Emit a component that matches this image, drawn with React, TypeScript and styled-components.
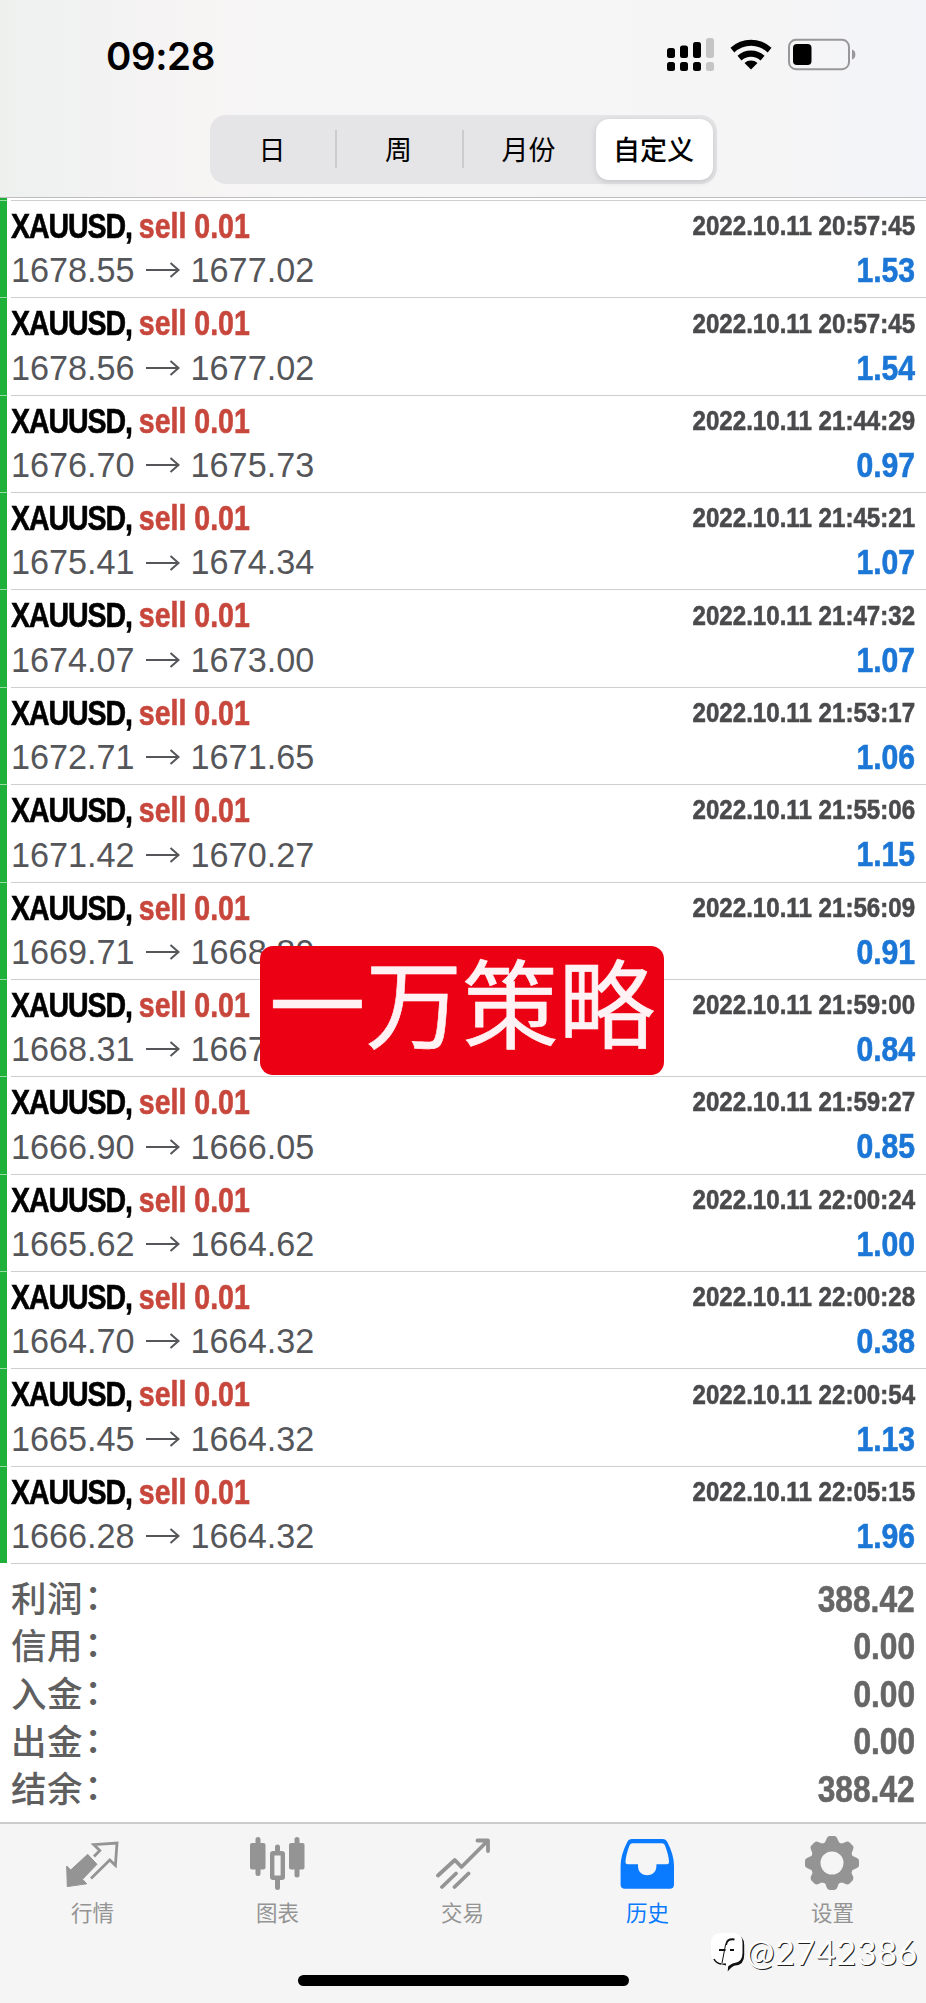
import React from 'react';
import styled, { createGlobalStyle } from 'styled-components';

const Global = createGlobalStyle`
  * { box-sizing: border-box; }
  body { margin: 0; background: #fff; font-family: 'Liberation Sans', 'Noto Sans CJK SC', sans-serif; }
`;

const Screen = styled.div`
  position: relative;
  width: 926px;
  height: 2003px;
  display: flex;
  flex-direction: column;
  background: #fff;
  overflow: hidden;
`;

const Header = styled.header`
  height: 198px;
  flex: none;
  border-bottom: 1px solid #bdbdbf;
  background: linear-gradient(90deg, #edf1ee 0, #f2f2f3 90px, #f7f4f4 200px, #f6f6f6 300px, #f5f5f6 780px, #f3f4f9 926px);
`;

const StatusBar = styled.div`
  height: 115px;
  display: flex;
  justify-content: space-between;
  align-items: flex-start;
  padding: 35px 69px 0 106px;
`;

const Clock = styled.div`
  font: 600 38.5px/42px Inter, sans-serif;
  letter-spacing: -0.4px;
  color: #000;
`;

const Segments = styled.nav`
  width: 507px;
  height: 69px;
  margin-left: 210px;
  padding: 4px 4px 4px 0;
  display: flex;
  border-radius: 16px;
  background: #e5e4e6;
`;

const Segment = styled.button<{ $active?: boolean; $divider?: boolean; $w: number }>`
  position: relative;
  width: ${p => p.$w}px;
  height: 61px;
  padding: 0 2px 1px 0;
  border: 0;
  border-radius: 13px;
  background: ${p => (p.$active ? '#fff' : 'transparent')};
  box-shadow: ${p => (p.$active ? '0 2px 6px rgba(0,0,0,.14)' : 'none')};
  font: ${p => (p.$active ? 500 : 400)} 27px/60px 'Noto Sans CJK SC', sans-serif;
  color: #000;
  white-space: nowrap;
  &::after {
    content: '';
    display: ${p => (p.$divider ? 'block' : 'none')};
    position: absolute;
    right: -1px;
    top: 11px;
    width: 2px;
    height: 38px;
    background: #ccccce;
  }
`;

const Deals = styled.ul`
  margin: 0;
  padding: 2px 0 0;
  list-style: none;
  border-left: 7px solid #1fb03a;
`;

const Deal = styled.li`
  position: relative;
  height: 97.36px;
  margin-left: 4px;
  padding: 5px 11px 0 0;
  border-top: 1px solid #cfcfd1;
  &::before {
    content: '';
    position: absolute;
    left: -11px;
    top: -1px;
    width: 7px;
    height: 1px;
    background: rgba(255, 255, 255, 0.55);
  }
`;

const DealsEnd = styled.div`
  height: 1px;
  margin-left: 11px;
  background: #cfcfd1;
`;

const Line = styled.div<{ $h: number }>`
  display: flex;
  justify-content: space-between;
  align-items: center;
  height: ${p => p.$h}px;
  white-space: pre;
`;

const Condensed = styled.span<{ $size: number; $color: string; $sx: number; $right?: boolean }>`
  display: inline-block;
  font: 700 ${p => p.$size}px/1 'Liberation Sans', sans-serif;
  color: ${p => p.$color};
  -webkit-text-stroke: 0.6px ${p => p.$color};
  transform: scaleX(${p => p.$sx});
  transform-origin: ${p => (p.$right ? 'right' : 'left')} center;
  white-space: pre;
`;

const Symbol = styled.span`
  letter-spacing: -1.3px;
`;

const Side = styled.span`
  color: #c8473c;
  -webkit-text-stroke-color: #c8473c;
`;

const Prices = styled.span`
  display: flex;
  align-items: center;
  font-size: 34.2px;
  line-height: 1;
  color: #55565a;
  svg { margin: 0 11px; }
`;

const Summary = styled.section`
  flex: 1;
  padding: 12px 11px 0;
`;

const SummaryRow = styled.div`
  display: flex;
  justify-content: space-between;
  align-items: center;
  height: 47.6px;
`;

const Label = styled.span`
  font: 500 35.5px/47px 'Noto Sans CJK SC', sans-serif;
  letter-spacing: 0.6px;
  margin-top: -7px;
  color: #5f5f5f;
`;

const Colon = styled.span`
  position: relative;
  top: -2px;
  left: 1px;
`;

const TabBar = styled.footer`
  height: 181px;
  flex: none;
  display: flex;
  padding-right: 1px;
  border-top: 2px solid #cccccd;
  background: #f5f5f5;
`;

const Tab = styled.div<{ $active?: boolean }>`
  flex: 1;
  display: flex;
  flex-direction: column;
  align-items: center;
  padding-top: 11px;
  color: ${p => (p.$active ? '#0a7aff' : '#949494')};
  svg { display: block; margin-left: -1px; }
  span { font: 400 21.5px/30px 'Noto Sans CJK SC', sans-serif; margin-top: 6px; }
`;

const HomeIndicator = styled.div`
  position: absolute;
  left: 298px;
  top: 1975px;
  width: 331px;
  height: 11px;
  border-radius: 6px;
  background: #000;
`;

const Badge = styled.div`
  position: absolute;
  left: 260px;
  top: 946px;
  width: 404px;
  height: 129px;
  border-radius: 13px;
  background: #ec0014;
  color: #fff2f4;
  text-align: center;
  font: 400 96.5px/106px 'Noto Sans CJK SC', sans-serif;
  -webkit-text-stroke: 0.6px #fff2f4;
  white-space: nowrap;
`;

const Watermark = styled.div`
  position: absolute;
  right: 8px;
  top: 1930px;
  display: flex;
  align-items: center;
  height: 44px;
  color: #fff;
  font: 400 34px/44px Lato, sans-serif;
  text-shadow: 1px 1px 0.5px #222;
  span { letter-spacing: 0.7px; }
`;

const deals: [string, string, string, string][] = [
  ['1678.55', '1677.02', '20:57:45', '1.53'],
  ['1678.56', '1677.02', '20:57:45', '1.54'],
  ['1676.70', '1675.73', '21:44:29', '0.97'],
  ['1675.41', '1674.34', '21:45:21', '1.07'],
  ['1674.07', '1673.00', '21:47:32', '1.07'],
  ['1672.71', '1671.65', '21:53:17', '1.06'],
  ['1671.42', '1670.27', '21:55:06', '1.15'],
  ['1669.71', '1668.80', '21:56:09', '0.91'],
  ['1668.31', '1667.47', '21:59:00', '0.84'],
  ['1666.90', '1666.05', '21:59:27', '0.85'],
  ['1665.62', '1664.62', '22:00:24', '1.00'],
  ['1664.70', '1664.32', '22:00:28', '0.38'],
  ['1665.45', '1664.32', '22:00:54', '1.13'],
  ['1666.28', '1664.32', '22:05:15', '1.96'],
];

const totals: [string, string][] = [
  ['利润', '388.42'],
  ['信用', '0.00'],
  ['入金', '0.00'],
  ['出金', '0.00'],
  ['结余', '388.42'],
];

const StatusIcons = () => (
  <svg width="192" height="40" viewBox="665 35 192 40">
    <g>
      <rect x="667" y="48" width="8" height="10" rx="2.5" />
      <rect x="680" y="45.5" width="8" height="12.5" rx="2.5" />
      <rect x="693" y="42" width="8" height="16" rx="2.5" />
      <rect x="667" y="62" width="8" height="9" rx="2.5" />
      <rect x="680" y="62" width="8" height="9" rx="2.5" />
      <rect x="693" y="62" width="8" height="9" rx="2.5" />
    </g>
    <g fill="#c5c5c6">
      <rect x="706" y="38" width="8" height="20" rx="2.5" />
      <rect x="706" y="62" width="8" height="9" rx="2.5" />
    </g>
    <path d="M730.5 47.8a30 30 0 0 1 41 0l-3.8 4.6a24.5 24.5 0 0 0-33.4 0z" />
    <path d="M737.5 55.8a20 20 0 0 1 27 0l-4 4.6a14.2 14.2 0 0 0-19 0z" />
    <path d="M744.5 63a10 10 0 0 1 13 0l-6.5 6.5z" />
    <rect x="789" y="39.8" width="60" height="29.4" rx="7" fill="none" stroke="#98989a" strokeWidth="2" />
    <path d="M852 49.5c4.5 1 4.5 9 0 10z" fill="#98989a" />
    <rect x="793" y="44" width="18.5" height="21" rx="4" />
  </svg>
);

const Arrow = () => (
  <svg width="34" height="16" viewBox="0 0 34 16" fill="none" stroke="#55565a" strokeWidth="2">
    <path d="M0 8H32M24.5 1l8 7-8 7" />
  </svg>
);

const QuotesIcon = () => (
  <svg width="56" height="56" viewBox="64 1835 56 56">
    <path d="M66.7 1866l4 4L87.7 1854.3l9.3 10-14.5 15 4.2 4.5-19.4 2.8z" fill="#949494" stroke="#949494" strokeLinejoin="round" />
    <path d="M94 1856.5l5.8-6-6-5.8L117 1843l-1.6 22.5-5.6-5.5L91 1878.5" fill="none" stroke="#949494" strokeWidth="2.8" />
  </svg>
);

const ChartIcon = () => (
  <svg width="56" height="56" viewBox="249 1835 56 56" fill="#949494">
    <rect x="250" y="1843" width="15.5" height="26.5" rx="2" />
    <rect x="255.5" y="1837" width="5" height="39" rx="2.5" />
    <rect x="289" y="1843" width="15.5" height="26.5" rx="2" />
    <rect x="294.5" y="1837" width="5" height="40.5" rx="2.5" />
    <rect x="272.2" y="1853.2" width="10.6" height="24.5" rx="1" fill="none" stroke="#949494" strokeWidth="4.4" />
    <rect x="275" y="1844.5" width="5" height="8" rx="2.5" />
    <rect x="275" y="1878" width="5" height="12" rx="2.5" />
  </svg>
);

const TradeIcon = () => (
  <svg width="56" height="56" viewBox="433.5 1835 56 56" fill="none" stroke="#949494" strokeWidth="3.8" strokeLinecap="round" strokeLinejoin="round">
    <path d="M437.5 1875.5L454.3 1860l6.7 7 26-26M477 1840.5h10.5V1851M441.5 1887l14-13.5M454 1887l14-13.5" />
  </svg>
);

const HistoryIcon = () => (
  <svg width="56" height="56" viewBox="619 1835 56 56" fill="#0a7aff">
    <path
      fillRule="evenodd"
      d="M632 1839h31q3 0 4.2 2.7 6.8 13 6.8 24V1884.5q0 4.2-4.2 4.2h-45q-4.2 0-4.2-4.2v-18.8q0-11 6.8-24 1.2-2.7 4.6-2.7zM632.5 1843.3q-2 0-2.8 1.6-3.6 9-4.2 16.4-.3 2.9 2.2 2.9H638v2c0 12 18.4 12 18.4 0v-2h10.4q2.5 0 2.2-2.9-.6-7.4-4.2-16.4-.8-1.6-2.8-1.6z"
    />
  </svg>
);

const GearIcon = () => (
  <svg width="56" height="56" viewBox="-28 -28 56 56" fill="#949494">
    <mask id="hub">
      <rect x="-28" y="-28" width="56" height="56" fill="#fff" />
      <circle r="11.5" fill="#000" />
    </mask>
    <g mask="url(#hub)">
      <circle r="21.5" />
      {[0, 45, 90, 135, 180, 225, 270, 315].map(a => (
        <path key={a} transform={`rotate(${a})`} d="M-9.5-18.5q3-1.5 4-5.5.9-3 3-3h5q2.1 0 3 3 1 4 4 5.5z" />
      ))}
    </g>
  </svg>
);

const Logo = () => (
  <svg width="36" height="40" viewBox="0 0 36 40">
    <path d="M11 2h12q10 0 10 10v10q0 10-9 10.5-3 .5-7.5 6l.5-5.5L7 30.5Q2 28 2 22V12Q2 2 11 2z" fill="#111" transform="translate(1.2 1)" />
    <path d="M11 1h12q9.5 0 9.5 10v10q0 9-8 10-4 .5-8.5 5.5v-5H11Q1 31 1 21V11Q1 1 11 1z" fill="#fff" />
    <path d="M24.5 7.5c-5-1-8 1-8.5 5.5M9 18h6.5M20 18h4" fill="none" stroke="#111" strokeWidth="2" />
    <path d="M15.5 13L12 31" fill="none" stroke="#111" strokeWidth="1" />
    <path d="M4 27q2 4 7 5" fill="none" stroke="#111" strokeWidth="1.6" />
  </svg>
);

export default function App() {
  return (
    <Screen>
      <Global />
      <Header>
        <StatusBar>
          <Clock>09:28</Clock>
          <StatusIcons />
        </StatusBar>
        <Segments>
          <Segment $w={126} $divider>日</Segment>
          <Segment $w={127} $divider>周</Segment>
          <Segment $w={133}>月份</Segment>
          <Segment $w={117} $active>自定义</Segment>
        </Segments>
      </Header>
      <Deals>
        {deals.map(([open, close, time, profit], i) => (
          <Deal key={i}>
            <Line $h={39}>
              <Condensed $size={35} $color="#000" $sx={0.815}>
                <Symbol>XAUUSD, </Symbol>
                <Side>sell 0.01</Side>
              </Condensed>
              <Condensed $size={28.5} $color="#4a4a4d" $sx={0.846} $right>2022.10.11 {time}</Condensed>
            </Line>
            <Line $h={51}>
              <Prices>{open}<Arrow />{close}</Prices>
              <Condensed $size={34.5} $color="#1b76d6" $sx={0.875} $right>{profit}</Condensed>
            </Line>
          </Deal>
        ))}
      </Deals>
      <DealsEnd />
      <Summary>
        {totals.map(([label, value]) => (
          <SummaryRow key={label}>
            <Label>{label}<Colon>：</Colon></Label>
            <Condensed $size={36.5} $color="#666" $sx={0.868} $right>{value}</Condensed>
          </SummaryRow>
        ))}
      </Summary>
      <TabBar>
        <Tab><QuotesIcon /><span>行情</span></Tab>
        <Tab><ChartIcon /><span>图表</span></Tab>
        <Tab><TradeIcon /><span>交易</span></Tab>
        <Tab $active><HistoryIcon /><span>历史</span></Tab>
        <Tab><GearIcon /><span>设置</span></Tab>
      </TabBar>
      <HomeIndicator />
      <Badge>一万策略</Badge>
      <Watermark><Logo /><span>@2742386</span></Watermark>
    </Screen>
  );
}
